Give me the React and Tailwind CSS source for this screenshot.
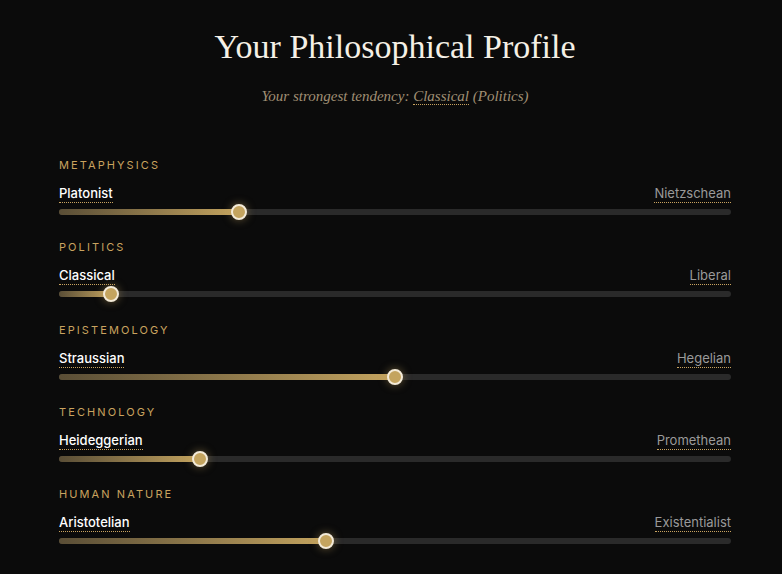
import React from 'react';

const axes = [
  { name: 'Metaphysics', left: 'Platonist', right: 'Nietzschean', value: 26.8 },
  { name: 'Politics', left: 'Classical', right: 'Liberal', value: 7.8 },
  { name: 'Epistemology', left: 'Straussian', right: 'Hegelian', value: 50 },
  { name: 'Technology', left: 'Heideggerian', right: 'Promethean', value: 21 },
  { name: 'Human Nature', left: 'Aristotelian', right: 'Existentialist', value: 39.8 },
];

function AxisRow({ axis }) {
  return (
    <div>
      <div className="text-[11px] leading-4 tracking-[0.19em] uppercase text-[#c9a35f]">
        {axis.name}
      </div>
      <div className="mt-3 flex items-start justify-between text-[13px] leading-[17px]">
        <span className="font-medium text-white border-b border-dotted border-[#c9a35f]">
          {axis.left}
        </span>
        <span className="text-[#9a9a9a] border-b border-dotted border-[#c9a35f]">
          {axis.right}
        </span>
      </div>
      <div className="relative mt-[6px] h-1.5 rounded-full bg-[#2a2a2a]">
        <div
          className="absolute left-0 top-0 h-full rounded-full bg-gradient-to-r from-[#5a4e36] to-[#c4a45f]"
          style={{ width: `${axis.value}%` }}
        />
        <div
          className="absolute top-1/2 h-4 w-4 -translate-x-1/2 -translate-y-1/2 rounded-full border-2 border-[#f3ead8] bg-[#c4a45f] shadow-[0_0_8px_rgba(196,164,95,0.5)]"
          style={{ left: `${axis.value}%` }}
        />
      </div>
    </div>
  );
}

export default function App() {
  return (
    <div className="min-h-[574px] bg-[#0b0b0b] pt-[27px] font-['Inter',sans-serif]">
      <div className="ml-[59px] w-[672px]">
        <h1 className="text-center font-['Liberation_Serif',serif] text-[34px] leading-10 text-[#f5f0e6]">
          Your Philosophical Profile
        </h1>
        <p className="mt-[17px] text-center font-['Liberation_Serif',serif] text-[15px] italic leading-6 text-[#a08f74]">
          Your strongest tendency:{' '}
          <span className="border-b border-dotted border-[#c9a35f]">Classical</span>{' '}
          (Politics)
        </p>
        <div className="mt-[49px] flex flex-col gap-[24.3px]">
          {axes.map((axis) => (
            <AxisRow key={axis.name} axis={axis} />
          ))}
        </div>
      </div>
    </div>
  );
}
